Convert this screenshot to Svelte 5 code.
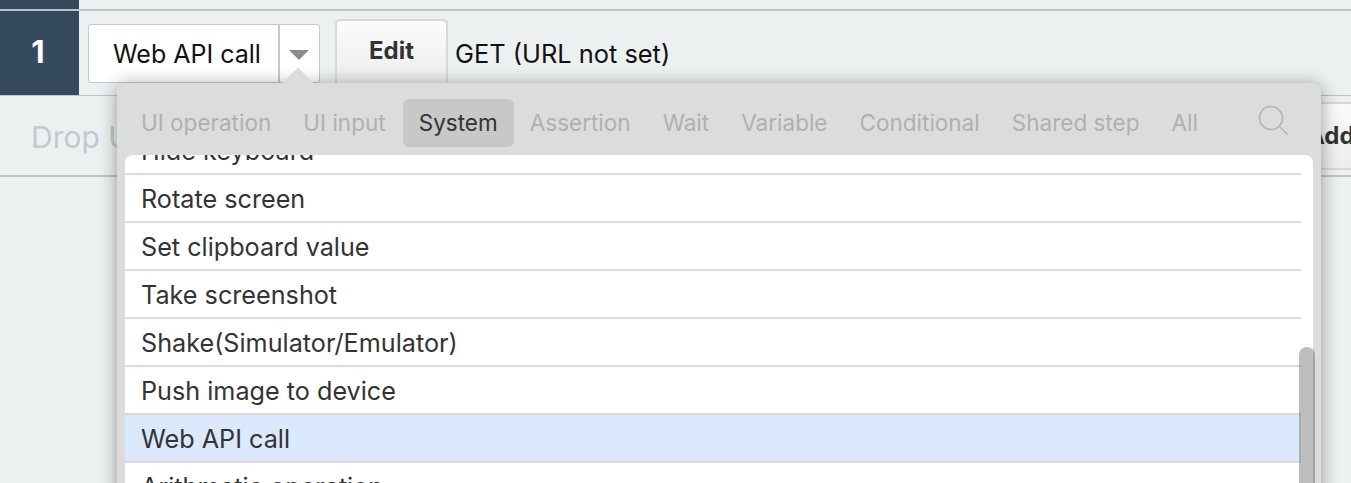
<script>
  const tabs = ['UI operation', 'UI input', 'System', 'Assertion', 'Wait', 'Variable', 'Conditional', 'Shared step', 'All'];
  const items = ['Rotate screen', 'Set clipboard value', 'Take screenshot', 'Shake(Simulator/Emulator)', 'Push image to device', 'Web API call', 'Arithmetic operation'];
</script>

<div class="page">
  <div class="row-top"><div class="num-top"></div></div>
  <div class="row-step">
    <div class="num">1</div>
    <div class="select">
      <span class="select-label">Web API call</span>
      <span class="caret"><i></i></span>
    </div>
    <button class="edit">Edit</button>
    <span class="summary">GET (URL not set)</span>
  </div>
  <div class="row-drop">
    <span class="drop">Drop UI elements here</span>
    <button class="add">Add</button>
  </div>

  <div class="popover">
    <div class="arrow"></div>
    <div class="tabs">
      {#each tabs as t}
        <span class="tab" class:active={t === 'System'}>{t}</span>
      {/each}
      <svg class="search" width="32" height="32" viewBox="0 0 32 32" fill="none" stroke="#b4b4b4" stroke-width="1.6">
        <circle cx="14" cy="13" r="11.5" />
        <path d="M22.2 21.2 L31 29.8" />
      </svg>
    </div>
    <div class="list">
      <div class="item first"><span>Hide keyboard</span></div>
      {#each items as it}
        <div class="item" class:selected={it === 'Web API call'}><span>{it}</span></div>
      {/each}
    </div>
    <div class="thumb"></div>
  </div>
</div>

<style>
  :global(body) { margin: 0; }
  .page {
    position: relative;
    width: 1351px;
    height: 483px;
    overflow: hidden;
    background: #ecf0f1;
    font-family: Inter, "Liberation Sans", sans-serif;
  }
  .row-top { height: 9px; border-bottom: 2px solid #bdc3c7; }
  .num-top { width: 79px; height: 9px; background: #34495e; }
  .row-step {
    height: 84px;
    display: flex;
    align-items: flex-start;
    border-bottom: 1px solid #bdc3c7;
  }
  .num {
    width: 79px;
    height: 84px;
    background: #34495e;
    color: #fff;
    font-size: 31px;
    font-weight: 700;
    display: flex;
    align-items: center;
    justify-content: center;
    padding: 0 3px 4px 0;
    box-sizing: border-box;
  }
  .select {
    margin: 13px 0 0 9px;
    width: 232px;
    height: 59px;
    box-sizing: border-box;
    border: 1px solid #c8c8c8;
    border-radius: 3px;
    background: #fff;
    display: flex;
  }
  .select-label {
    flex: 1;
    padding-left: 24px;
    font-size: 25px;
    line-height: 59px;
    color: #111;
    white-space: nowrap;
  }
  .caret {
    width: 39px;
    border-left: 2px solid #c8c8c8;
    position: relative;
  }
  .caret i {
    position: absolute;
    left: 9px;
    top: 25px;
    border-left: 10px solid transparent;
    border-right: 10px solid transparent;
    border-top: 10px solid #8c8c8c;
  }
  .edit {
    margin: 8px 0 0 15px;
    width: 113px;
    height: 70px;
    box-sizing: border-box;
    border: 2px solid #d8d8d8;
    border-radius: 5px;
    background: linear-gradient(#fbfbfb, #ececec);
    font: 700 24px Inter, "Liberation Sans", sans-serif;
    color: #333;
    padding: 0 0 8px;
  }
  .summary {
    margin: 28px 0 0 7px;
    font-size: 25.4px;
    line-height: 30px;
    color: #111;
    white-space: nowrap;
  }
  .row-drop {
    height: 79px;
    border-bottom: 2px solid #bdc3c7;
    display: flex;
    justify-content: space-between;
    align-items: center;
  }
  .drop {
    margin-left: 31px;
    padding-top: 3px;
    font-size: 30px;
    color: #c3c9cc;
    white-space: nowrap;
  }
  .add {
    width: 90px;
    height: 68px;
    margin-right: -32px;
    border: 2px solid #d8d8d8;
    border-radius: 5px;
    background: linear-gradient(#fbfbfb, #ececec);
    font: 700 24px Inter, "Liberation Sans", sans-serif;
    color: #333;
    text-align: left;
    padding: 0 0 0 12px;
  }
  .popover {
    position: absolute;
    left: 117px;
    top: 83px;
    width: 1204px;
    height: 420px;
    background: #dcdcdc;
    border-radius: 7px;
    box-shadow: 0 2px 18px rgba(0, 0, 0, 0.38);
  }
  .arrow {
    position: absolute;
    left: 170px;
    top: -11px;
    width: 22px;
    height: 22px;
    background: #dcdcdc;
    transform: rotate(45deg);
  }
  .tabs {
    position: relative;
    height: 72px;
    display: flex;
    align-items: flex-start;
    gap: 0.1px;
    padding: 16px 0 0 8px;
    box-sizing: border-box;
  }
  .tab {
    height: 48px;
    line-height: 48px;
    padding: 0 16px;
    border-radius: 6px;
    font-size: 22.5px;
    color: #b0b0b0;
    white-space: nowrap;
  }
  .tab.active { background: #c8c8c8; color: #333; margin-left: 1px; }
  .search { position: absolute; left: 1140px; top: 22px; }
  .list {
    margin: 0 8px;
    height: 348px;
    background: #fff;
    border-radius: 8px 8px 0 0;
    overflow: hidden;
  }
  .item {
    height: 46px;
    margin-right: 12px;
    border-bottom: 2px solid #dcdcdc;
    padding-left: 16px;
    font-size: 25.2px;
    line-height: 48px;
    color: #333;
    white-space: nowrap;
  }
  .item.first { height: 18px; line-height: 0; overflow: hidden; }
  .item.first span { display: block; margin-top: -11px; line-height: 14px; }
  .item.selected { background: #dce8fb; }
  .thumb {
    position: absolute;
    left: 1182px;
    top: 264px;
    width: 16px;
    height: 156px;
    background: rgba(0, 0, 0, 0.255);
    border-radius: 8px 8px 0 0;
  }
</style>
